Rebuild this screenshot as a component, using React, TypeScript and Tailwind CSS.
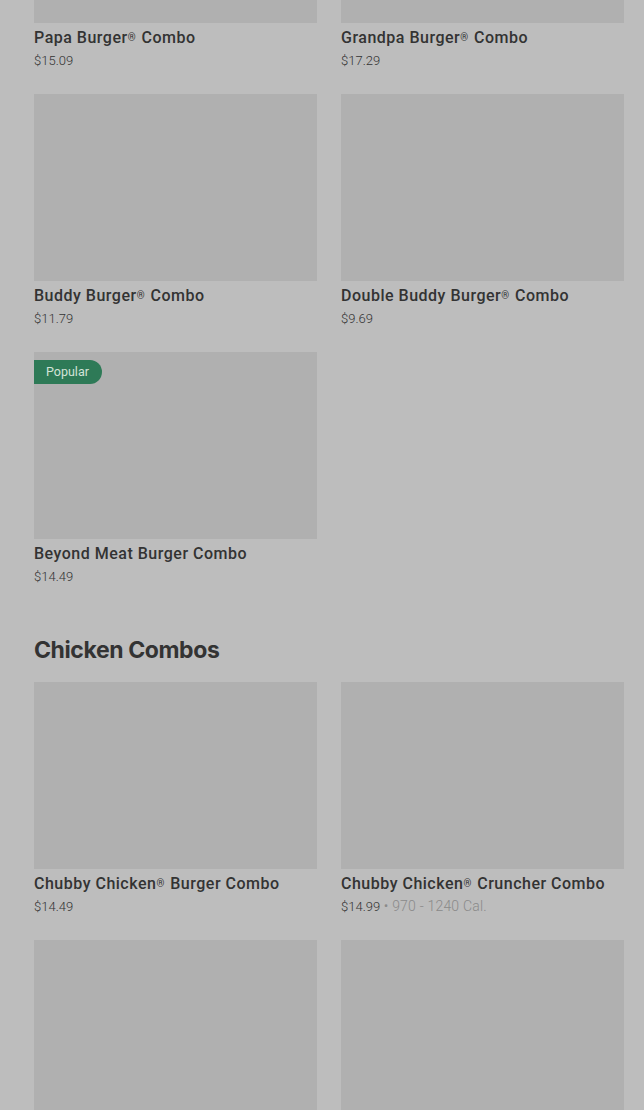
import React from "react";

type Item = { name?: string; price?: string; cal?: string; popular?: boolean };

const Name = ({ text }: { text: string }) => {
  const parts = text.split("®");
  return (
    <>
      {parts.map((p, i) => (
        <React.Fragment key={i}>
          {p}
          {i < parts.length - 1 && (
            <sup className="text-[10px] relative top-[-2px] mr-[1px]">®</sup>
          )}
        </React.Fragment>
      ))}
    </>
  );
};

const Card = ({ item, imgH }: { item: Item; imgH?: number }) => (
  <div className="flex flex-col">
    <div className="relative bg-[#b0b0b0] w-full" style={{ height: imgH ?? 187 }}>
      {item.popular && (
        <div className="absolute left-0 top-[8px] h-[24px] pl-[12px] pr-[13px] rounded-r-full bg-[#2e7a57] text-[#d3e3d8] text-[12.5px] leading-[24px] font-['Roboto',sans-serif]">
          Popular
        </div>
      )}
    </div>
    {item.name && (
      <>
        <div className="mt-[3px] text-[16px] leading-[24px] font-medium text-[#333333] font-['Roboto',sans-serif] tracking-[0.5px]">
          <Name text={item.name} />
        </div>
        <div className="text-[13px] leading-[21px] font-['Roboto',sans-serif] font-light text-[#333333]">
          {item.price}
          {item.cal && (
            <span className="text-[#8a8a8a] text-[14px] tracking-[0.2px]"> • {item.cal}</span>
          )}
        </div>
      </>
    )}
  </div>
);

export default function App() {
  return (
    <div className="w-[644px] h-[1110px] overflow-hidden bg-[#bdbdbd]">
      <div className="pl-[34px] pr-[20px]">
        <div className="grid grid-cols-2 gap-x-[24px] gap-y-[23px]">
          <Card item={{ name: "Papa Burger® Combo", price: "$15.09" }} imgH={23} />
          <Card item={{ name: "Grandpa Burger® Combo", price: "$17.29" }} imgH={23} />
          <Card item={{ name: "Buddy Burger® Combo", price: "$11.79" }} />
          <Card item={{ name: "Double Buddy Burger® Combo", price: "$9.69" }} />
          <Card item={{ name: "Beyond Meat Burger Combo", price: "$14.49", popular: true }} />
        </div>
        <h2 className="mt-[47px] mb-[16px] text-[23px] leading-[32px] font-bold text-[#333333] font-['Inter',sans-serif] tracking-[-0.4px]">
          Chicken Combos
        </h2>
        <div className="grid grid-cols-2 gap-x-[24px] gap-y-[23px]">
          <Card item={{ name: "Chubby Chicken® Burger Combo", price: "$14.49" }} />
          <Card item={{ name: "Chubby Chicken® Cruncher Combo", price: "$14.99", cal: "970 - 1240 Cal." }} />
          <Card item={{}} />
          <Card item={{}} />
        </div>
      </div>
    </div>
  );
}
